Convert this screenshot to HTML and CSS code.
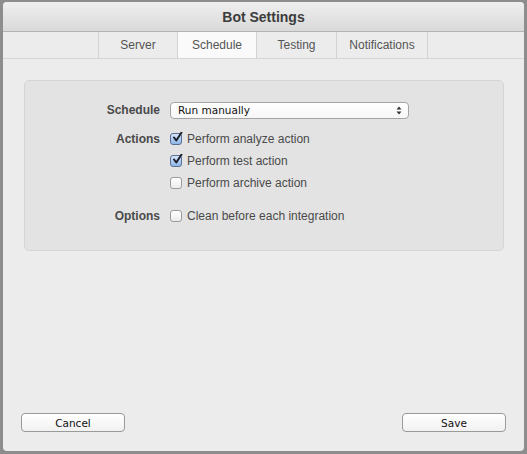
FILE: index.html
```html
<!DOCTYPE html>
<html>
<head>
<meta charset="utf-8">
<link rel="stylesheet" href="styles.css">
</head>
<body>
<div class="sheet">
  <div class="titlebar">Bot Settings</div>
  <div class="tabbar">
    <div class="tabs">
      <div class="tab w79">Server</div>
      <div class="tab w79 active">Schedule</div>
      <div class="tab w80">Testing</div>
      <div class="tab w91">Notifications</div>
    </div>
  </div>
  <div class="content">
    <div class="box">
      <div class="row row-select">
        <div class="label">Schedule</div>
        <div class="select">
          <span>Run manually</span>
          <svg class="arrows" width="6" height="9" viewBox="0 0 6 9"><path d="M3 0.5 L5.5 3.5 H0.5 Z M3 8.5 L5.5 5.5 H0.5 Z" fill="#333"/></svg>
        </div>
      </div>
      <div class="row row-first">
        <div class="label">Actions</div>
        <span class="cb checked"><svg width="12" height="12" viewBox="0 0 12 12"><path d="M3 5.5 L5.3 8.5 L10.5 0.5" fill="none" stroke="#1c1f2c" stroke-width="2" stroke-linecap="round" stroke-linejoin="round"/></svg></span>
        <span class="text">Perform analyze action</span>
      </div>
      <div class="row">
        <div class="label"></div>
        <span class="cb checked"><svg width="12" height="12" viewBox="0 0 12 12"><path d="M3 5.5 L5.3 8.5 L10.5 0.5" fill="none" stroke="#1c1f2c" stroke-width="2" stroke-linecap="round" stroke-linejoin="round"/></svg></span>
        <span class="text">Perform test action</span>
      </div>
      <div class="row">
        <div class="label"></div>
        <span class="cb"></span>
        <span class="text">Perform archive action</span>
      </div>
      <div class="row row-options">
        <div class="label">Options</div>
        <span class="cb"></span>
        <span class="text">Clean before each integration</span>
      </div>
    </div>
    <div class="footer">
      <div class="btn">Cancel</div>
      <div class="btn">Save</div>
    </div>
  </div>
</div>
</body>
</html>
```
FILE: styles.css
```css
html, body {
  margin: 0;
  padding: 0;
}
body {
  background: #8d8d8d;
  width: 527px;
  height: 454px;
  overflow: hidden;
  font-family: "Liberation Sans", Arial, sans-serif;
}
.sheet {
  margin: 2px 3px 0 3px;
  width: 521px;
  height: 449px;
  background: #ececec;
  border-radius: 4px;
  overflow: hidden;
  display: flex;
  flex-direction: column;
}
.titlebar {
  height: 29px;
  border-bottom: 1px solid #b4b4b4;
  background: linear-gradient(#efefef, #d9d9d9);
  font-weight: bold;
  font-size: 14px;
  color: #3c3c3c;
  display: flex;
  align-items: center;
  justify-content: center;
}
.tabbar {
  height: 26px;
  border-bottom: 1px solid #d6d6d6;
  background: #ececec;
  display: flex;
}
.tabs {
  margin-left: 95px;
  display: flex;
  border-left: 1px solid #d2d2d2;
}
.tab {
  border-right: 1px solid #d2d2d2;
  font-size: 12px;
  color: #555;
  display: flex;
  align-items: center;
  justify-content: center;
  box-sizing: border-box;
}
.w79 { width: 79px; }
.w80 { width: 80px; }
.w91 { width: 91px; }
.tab.active {
  background: #fafafa;
}
.content {
  flex: 1;
  display: flex;
  flex-direction: column;
  padding: 21px 20px 0 21px;
}
.box {
  height: 150px;
  background: #e3e3e3;
  border: 1px solid #d5d5d5;
  border-radius: 5px;
  padding-top: 19px;
}
.row {
  display: flex;
  align-items: center;
  height: 22px;
}
.row-select {
  height: 20px;
}
.row-first {
  margin-top: 8px;
}
.row-options {
  margin-top: 11px;
}
.label {
  width: 135px;
  margin-right: 10px;
  text-align: right;
  font-weight: bold;
  font-size: 12px;
  color: #4a4a4a;
}
.select {
  height: 15px;
  width: 224px;
  background: linear-gradient(#ffffff, #f7f7f7);
  border: 1px solid #a4a4a4;
  border-radius: 4px;
  display: flex;
  align-items: center;
  justify-content: space-between;
  padding: 0 6px 0 7px;
  font-family: "DejaVu Sans", sans-serif;
  font-size: 10.5px;
  color: #111;
}
.cb {
  width: 10px;
  height: 10px;
  border: 1px solid #9b9b9b;
  border-radius: 3px;
  background: linear-gradient(#ffffff, #ededed);
  position: relative;
  flex: none;
}
.cb.checked {
  border-color: #5a6f96;
  background: linear-gradient(#d7e6f8, #8db6e8);
}
.cb svg {
  position: absolute;
  left: 0;
  top: -2px;
}
.text {
  margin-left: 5px;
  font-size: 12px;
  color: #4a4a4a;
}
.footer {
  margin-top: auto;
  margin-bottom: 19px;
  display: flex;
  justify-content: space-between;
  margin-left: -3px;
  margin-right: -2px;
}
.btn {
  width: 102px;
  height: 17px;
  border: 1px solid #9a9a9a;
  border-radius: 4px;
  background: linear-gradient(#ffffff, #f1f1f1);
  font-family: "DejaVu Sans", sans-serif;
  font-size: 10.5px;
  color: #111;
  display: flex;
  align-items: center;
  justify-content: center;
}
```
